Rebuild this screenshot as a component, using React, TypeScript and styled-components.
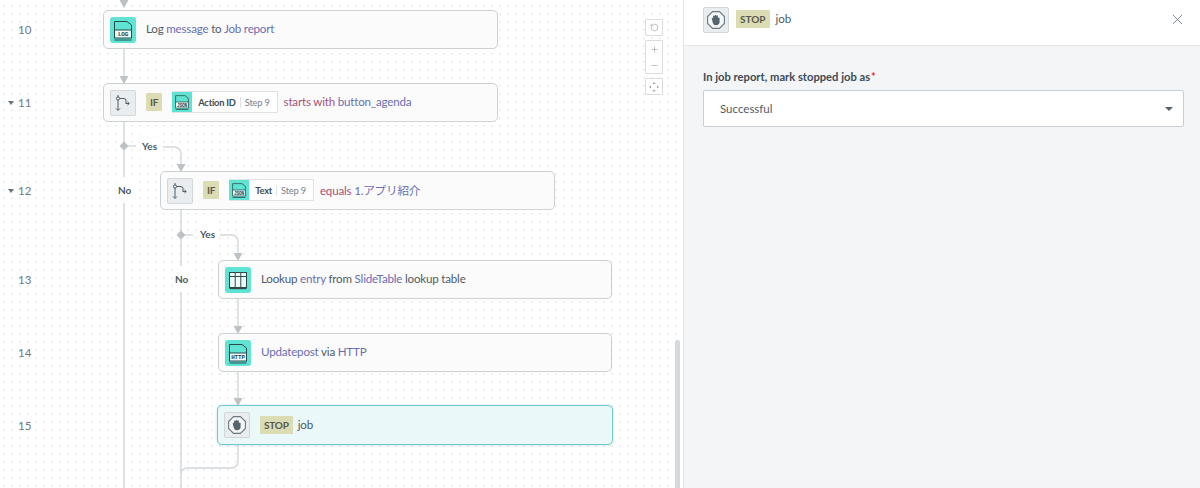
import React from 'react';
import styled, { createGlobalStyle } from 'styled-components';
import { Minus, Plus, RotateCcw, X } from 'lucide-react';

const GlobalStyle = createGlobalStyle`
  html, body { margin: 0; padding: 0; height: 100%; overflow: hidden; }
  body { font-family: Lato, "Noto Sans CJK JP", sans-serif; color: #3d4b55; }
`;

const Page = styled.div`
  display: flex;
  width: 1200px;
  height: 488px;
  overflow: hidden;
`;

const Canvas = styled.div`
  position: relative;
  width: 684px;
  flex: none;
  background-color: #fff;
  background-image: radial-gradient(circle at 1px 1px, #edeff0 0.9px, transparent 1.1px);
  background-size: 8px 8px;
  background-position: 3px 5px;
  border-right: 1px solid #e3e6e8;
  box-sizing: border-box;
`;

const Wires = styled.svg`
  position: absolute;
  inset: 0;
`;

const StepCard = styled.div<{ $x: number; $y: number; $w: number; $active?: boolean }>`
  position: absolute;
  left: ${p => p.$x}px;
  top: ${p => p.$y}px;
  width: ${p => p.$w}px;
  height: ${p => (p.$active ? 40 : 39)}px;
  box-sizing: border-box;
  display: flex;
  align-items: center;
  padding-left: 6px;
  border: ${p => (p.$active ? '1.5px solid #70c8c8' : '1px solid #cbd0d3')};
  border-radius: 5px;
  background: ${p => (p.$active ? '#eaf8f9' : '#fbfbfc')};
  font-size: 11.6px;
  letter-spacing: -0.2px;
  box-shadow: ${p => (p.$active ? '0 0 3px rgba(80,190,190,.4)' : 'none')};
`;

const LineNumber = styled.div<{ $y: number }>`
  position: absolute;
  left: 18px;
  top: ${p => p.$y}px;
  font-size: 11.5px;
  line-height: 14px;
  color: #6f7b83;
`;

const Caret = styled.span`
  position: absolute;
  left: -10px;
  top: 5px;
  border: 3.5px solid transparent;
  border-top: 4px solid #67747c;
  border-bottom: 0;
`;

const AppTile = styled.div`
  width: 26px;
  height: 26px;
  flex: none;
  border-radius: 3px;
  background: #5fe3d2;
  display: flex;
  align-items: center;
  justify-content: center;
`;

const GreyTile = styled.div`
  width: 26px;
  height: 26px;
  flex: none;
  box-sizing: border-box;
  border: 1px solid #d2d7da;
  border-radius: 2px;
  background: #e9edf0;
  display: flex;
  align-items: center;
  justify-content: center;
`;

const Sentence = styled.span<{ $gap?: number }>`
  margin-left: ${p => p.$gap ?? 10}px;
  margin-bottom: 2px;
  white-space: nowrap;
  color: #4f5c65;
`;

const Var = styled.span`
  color: #6a6eb2;
`;

const Op = styled.span`
  color: #a84f76;
`;

const Keyword = styled.span<{ $gap?: number }>`
  flex: none;
  height: 18px;
  line-height: 18px;
  padding: 0 4px;
  margin-left: ${p => p.$gap ?? 10}px;
  margin-bottom: 1px;
  border-radius: 1px;
  background: #dcdcb4;
  color: #55594a;
  font-size: 10px;
  font-weight: 700;
`;

const Pill = styled.span`
  display: flex;
  align-items: center;
  height: 20px;
  margin-left: 10px;
  margin-bottom: 1px;
  border: 1px solid #dfe3e5;
  background: #fff;
  font-size: 9.3px;
  white-space: nowrap;
`;

const PillIcon = styled.span`
  width: 20px;
  height: 20px;
  margin: -1px 0 -1px -1px;
  background: #5fe3d2;
  display: flex;
  align-items: center;
  justify-content: center;
`;

const PillName = styled.b`
  margin-left: 6px;
  padding-right: 4px;
  border-right: 1px solid #dfe3e5;
  color: #3d4b55;
`;

const PillStep = styled.span`
  padding: 0 7px 0 4px;
  color: #75818a;
`;

const BranchLabel = styled.span<{ $x: number; $y: number }>`
  position: absolute;
  left: ${p => p.$x}px;
  top: ${p => p.$y}px;
  padding: 6px 2px;
  background: #fff;
  font-size: 10px;
  line-height: 14px;
  font-weight: 700;
  color: #4b5962;
`;

const Controls = styled.div`
  position: absolute;
  left: 645px;
  top: 19px;
  width: 18px;
  display: flex;
  flex-direction: column;
  gap: 4px;
`;

const ControlBox = styled.div`
  box-sizing: border-box;
  width: 18px;
  border: 1px solid #d9dde0;
  border-radius: 1px;
  background: #fff;
  display: flex;
  flex-direction: column;
  align-items: center;
  justify-content: space-around;
  color: #a5adb3;
`;

const SingleBox = styled(ControlBox)`
  height: 17px;
`;

const DoubleBox = styled(ControlBox)`
  height: 34px;
`;

const ScrollThumb = styled.div`
  position: absolute;
  left: 675px;
  top: 340px;
  bottom: 0;
  width: 5px;
  border-radius: 3px 3px 0 0;
  background: #d3dadd;
`;

const Panel = styled.div`
  flex: 1;
  display: flex;
  flex-direction: column;
  background: #f3f5f6;
`;

const PanelHeader = styled.div`
  height: 46px;
  box-sizing: border-box;
  display: flex;
  align-items: center;
  padding: 0 14px 6px 19px;
  background: #fff;
  border-bottom: 1px solid #e3e6e8;
  font-size: 11.6px;
`;

const CloseButton = styled.div`
  margin-left: auto;
  display: flex;
  color: #6f7b83;
`;

const PanelBody = styled.div`
  padding: 23px 16px 0 19px;
`;

const FieldLabel = styled.div`
  font-size: 11.2px;
  line-height: 15px;
  font-weight: 700;
  color: #3d4b55;
  margin-bottom: 6px;
`;

const Required = styled.span`
  color: #d8344a;
  margin-left: 1px;
`;

const SelectBox = styled.div`
  height: 37px;
  box-sizing: border-box;
  display: flex;
  align-items: center;
  justify-content: space-between;
  padding: 0 10px 0 16px;
  background: #fff;
  border: 1px solid #c9ced2;
  border-radius: 2px;
  font-size: 11.5px;
  color: #4f5c65;
`;

const SelectCaret = styled.span`
  border: 4px solid transparent;
  border-top: 4px solid #55626b;
  border-bottom: 0;
`;

const FileIcon = ({ label, size = 24 }: { label: string; size?: number }) => (
  <svg width={size} height={size} viewBox="0 0 24 24" fill="none" stroke="#2c4a4c" strokeWidth="1">
    <path d="M3.5 12V3.5h12.5l4.5 3.5V12" />
    <rect x="3.5" y="12" width="17" height="8" fill="#eefcfa" />
    <text x="12" y="18.2" textAnchor="middle" fontSize="6" fontWeight="700" fill="#2c4a4c" stroke="none" fontFamily="Liberation Mono, monospace">
      {label}
    </text>
    <path d="M3.5 22h17" />
  </svg>
);

const TableIcon = () => (
  <svg width="24" height="24" viewBox="0 0 24 24" fill="none" stroke="#2c4a4c" strokeWidth="1">
    <rect x="3.5" y="4.5" width="17" height="15" fill="#eefcfa" />
    <path d="M3.5 8.5h17M9.2 4.5v15M14.8 4.5v15" />
    <path d="M3.5 20.5h17" strokeWidth="1.4" />
  </svg>
);

const BranchIcon = () => (
  <svg width="20" height="20" viewBox="0 0 20 20" fill="none" stroke="#4f5d66" strokeWidth="1">
    <path d="M5 2v15M5 5.5h6a2 2 0 0 1 2 2V10" />
    <circle cx="5" cy="5.5" r="1.6" fill="#e9edf0" />
    <path d="M12.5 10.5h3.5M14.5 9l1.8 1.5-1.8 1.5M3 15.5 5 17.5l2-2" />
  </svg>
);

const StopIcon = () => (
  <svg width="20" height="20" viewBox="0 0 20 20">
    <path d="M6.6 1.6h6.8l5 5v6.8l-5 5H6.6l-5-5V6.6z" fill="#f4f6f7" stroke="#6a7880" strokeWidth="1.1" />
    <path d="M5.7 8.6c0-1.1 1.3-1.1 1.4-.2V6.3c0-1.2 1.4-1.2 1.5 0 0-1.6 1.7-1.6 1.7-.1.1-1.2 1.6-1.2 1.6.1v1.9c.3-1 1.7-.9 1.7.2v3.4c0 2-1.5 3.5-3.5 3.5-1.7 0-2.6-.9-3.2-2.4z" fill="#56646d" />
  </svg>
);

const RecenterIcon = () => (
  <svg width="12" height="12" viewBox="0 0 12 12" fill="#9aa3a9">
    <path d="M6 1 7.6 3H4.4zM6 11 4.4 9h3.2zM1 6l2-1.6v3.2zM11 6 9 7.6V4.4z" />
  </svg>
);

// wire paths, drawn below the step cards
const wires = [
  'M124 49V76',
  'M124 122V488',
  'M124 146H136',
  'M163 147H174a7 7 0 0 1 7 7V164',
  'M181 210V488',
  'M181 235H193',
  'M220 235H232a6 6 0 0 1 6 6V253',
  'M238 299V326',
  'M238 372V398',
  'M238 445V462a6 6 0 0 1-6 6H187a6 6 0 0 0-6 6',
];

const arrows = [[124, 0], [124, 76], [181, 164], [238, 253], [238, 326], [238, 398]];
const diamonds = [[124, 146], [181, 235]];

const App: React.FC = () => (
  <Page>
    <GlobalStyle />
    <Canvas>
      <Wires width="683" height="488">
        {wires.map((d, i) => (
          <path key={i} d={d} fill="none" stroke="#d3d7da" strokeWidth="1.4" />
        ))}
        {arrows.map(([x, y], i) => (
          <path key={i} d={`M${x - 4.5} ${y}h9L${x} ${y + 8}z`} fill="#bcc2c6" />
        ))}
        {diamonds.map(([x, y], i) => (
          <path key={i} d={`M${x} ${y - 4.5}l4.5 4.5-4.5 4.5-4.5-4.5z`} fill="#bcc2c6" />
        ))}
      </Wires>

      <LineNumber $y={23}>10</LineNumber>
      <LineNumber $y={96}><Caret />11</LineNumber>
      <LineNumber $y={184}><Caret />12</LineNumber>
      <LineNumber $y={273}>13</LineNumber>
      <LineNumber $y={346}>14</LineNumber>
      <LineNumber $y={419}>15</LineNumber>

      <StepCard $x={103} $y={10} $w={395}>
        <AppTile><FileIcon label="LOG" /></AppTile>
        <Sentence>Log <Var>message</Var> to <Var>Job report</Var></Sentence>
      </StepCard>

      <StepCard $x={103} $y={83} $w={395}>
        <GreyTile><BranchIcon /></GreyTile>
        <Keyword>IF</Keyword>
        <Pill>
          <PillIcon><FileIcon label="JSON" size={18} /></PillIcon>
          <PillName>Action ID</PillName>
          <PillStep>Step 9</PillStep>
        </Pill>
        <Sentence $gap={6}><Op>starts with</Op> <Var>button_agenda</Var></Sentence>
      </StepCard>

      <BranchLabel $x={140} $y={133}>Yes</BranchLabel>
      <BranchLabel $x={116} $y={177}>No</BranchLabel>

      <StepCard $x={160} $y={171} $w={395}>
        <GreyTile><BranchIcon /></GreyTile>
        <Keyword>IF</Keyword>
        <Pill>
          <PillIcon><FileIcon label="JSON" size={18} /></PillIcon>
          <PillName>Text</PillName>
          <PillStep>Step 9</PillStep>
        </Pill>
        <Sentence $gap={6}><Op>equals</Op> <Var>1.アプリ紹介</Var></Sentence>
      </StepCard>

      <BranchLabel $x={198} $y={221}>Yes</BranchLabel>
      <BranchLabel $x={173} $y={266}>No</BranchLabel>

      <StepCard $x={218} $y={260} $w={394}>
        <AppTile><TableIcon /></AppTile>
        <Sentence>Lookup <Var>entry</Var> from <Var>SlideTable</Var> lookup table</Sentence>
      </StepCard>

      <StepCard $x={218} $y={333} $w={394}>
        <AppTile><FileIcon label="HTTP" /></AppTile>
        <Sentence><Var>Updatepost</Var> via <Var>HTTP</Var></Sentence>
      </StepCard>

      <StepCard $x={217} $y={405} $w={396} $active>
        <GreyTile><StopIcon /></GreyTile>
        <Keyword>STOP</Keyword>
        <Sentence $gap={5}>job</Sentence>
      </StepCard>

      <Controls>
        <SingleBox><RotateCcw size={9} /></SingleBox>
        <DoubleBox><Plus size={9} /><Minus size={9} /></DoubleBox>
        <SingleBox><RecenterIcon /></SingleBox>
      </Controls>
      <ScrollThumb />
    </Canvas>

    <Panel>
      <PanelHeader>
        <GreyTile><StopIcon /></GreyTile>
        <Keyword $gap={7}>STOP</Keyword>
        <Sentence $gap={6}>job</Sentence>
        <CloseButton><X size={17} strokeWidth={1.2} /></CloseButton>
      </PanelHeader>
      <PanelBody>
        <FieldLabel>In job report, mark stopped job as<Required>*</Required></FieldLabel>
        <SelectBox>
          Successful
          <SelectCaret />
        </SelectBox>
      </PanelBody>
    </Panel>
  </Page>
);

export default App;
